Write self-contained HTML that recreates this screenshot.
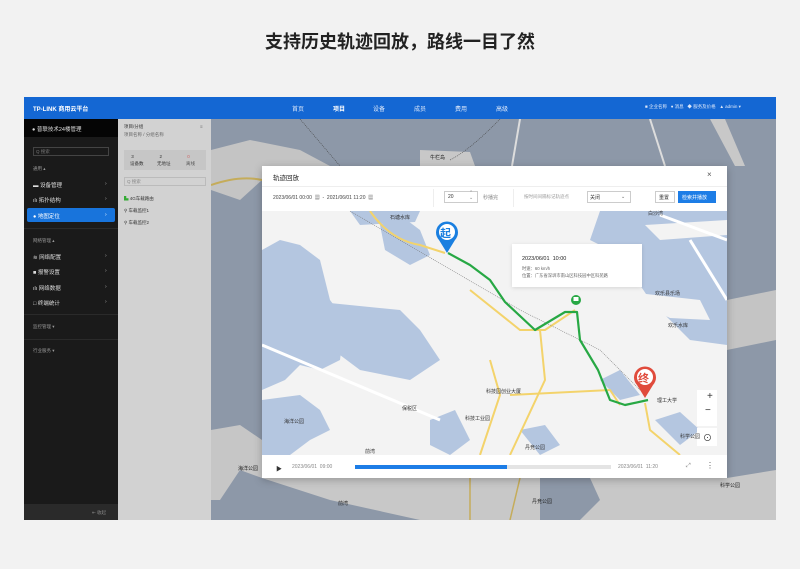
<!DOCTYPE html>
<html><head><meta charset="utf-8"><style>
*{margin:0;padding:0;box-sizing:border-box}
body{width:800px;height:569px;background:#f2f2f2;font-family:"Liberation Sans","Noto Sans CJK SC",sans-serif;position:relative;overflow:hidden;color:#333}
.a{position:absolute}
.t{font-size:5px;white-space:nowrap}
</style></head><body>
<div class="a" style="left:0;top:28px;width:800px;text-align:center;font-size:18px;font-weight:bold;color:#222">支持历史轨迹回放，路线一目了然</div>

<!-- top bar -->
<div class="a" style="left:24px;top:97px;width:752px;height:22px;background:#1467d3"></div>
<div class="a t" style="left:33px;top:104px;color:#fff;font-size:6px;font-weight:bold">TP-LINK 商用云平台</div>
<div class="a t" style="left:292px;top:104px;color:#dde8fa;font-size:6px">首页</div>
<div class="a t" style="left:333px;top:104px;color:#fff;font-size:6px;font-weight:bold">项目</div>
<div class="a t" style="left:373px;top:104px;color:#dde8fa;font-size:6px">设备</div>
<div class="a t" style="left:414px;top:104px;color:#dde8fa;font-size:6px">成员</div>
<div class="a t" style="left:455px;top:104px;color:#dde8fa;font-size:6px">费用</div>
<div class="a t" style="left:496px;top:104px;color:#dde8fa;font-size:6px">高级</div>
<div class="a t" style="left:645px;top:104px;color:#dde8fa;font-size:4.5px">■ 企业名称 &nbsp; ● 消息 &nbsp; ◆ 服务及价格 &nbsp; ▲ admin ▾</div>

<!-- sidebar -->
<div class="a" style="left:24px;top:119px;width:94px;height:401px;background:#1a1a1a"></div>
<div class="a" style="left:24px;top:119px;width:94px;height:18px;background:#050505"></div>
<div class="a t" style="left:32px;top:125px;color:#ddd;font-size:5.5px">● 普联技术24楼管理</div>
<div class="a" style="left:33px;top:147px;width:76px;height:9px;border:1px solid #444"></div>
<div class="a t" style="left:36px;top:149px;color:#777;font-size:4.5px">Q 搜索</div>
<div class="a t" style="left:33px;top:166px;color:#999;font-size:4.5px">通用 ▴</div>
<div class="a t" style="left:33px;top:181px;color:#ddd;font-size:5.5px">▬ 设备管理</div>
<div class="a t" style="left:33px;top:196px;color:#ddd;font-size:5.5px">ılı 拓扑结构</div>
<div class="a" style="left:27px;top:208px;width:88px;height:14px;background:#1874dc;border-radius:2px"></div>
<div class="a t" style="left:33px;top:212px;color:#fff;font-size:5.5px">● 地图定位</div>
<div class="a t" style="left:105px;top:181px;color:#aaa">›</div>
<div class="a t" style="left:105px;top:196px;color:#aaa">›</div>
<div class="a t" style="left:105px;top:212px;color:#fff">›</div>
<div class="a" style="left:24px;top:228px;width:94px;height:1px;background:#2a2a2a"></div>
<div class="a t" style="left:33px;top:238px;color:#999;font-size:4.5px">网络管理 ▴</div>
<div class="a t" style="left:33px;top:253px;color:#ddd;font-size:5.5px">≋ 网络配置</div>
<div class="a t" style="left:33px;top:268px;color:#ddd;font-size:5.5px">■ 报警设置</div>
<div class="a t" style="left:33px;top:284px;color:#ddd;font-size:5.5px">ılı 网络数据</div>
<div class="a t" style="left:33px;top:299px;color:#ddd;font-size:5.5px">□ 终端统计</div>
<div class="a t" style="left:105px;top:253px;color:#aaa">›</div>
<div class="a t" style="left:105px;top:268px;color:#aaa">›</div>
<div class="a t" style="left:105px;top:284px;color:#aaa">›</div>
<div class="a t" style="left:105px;top:299px;color:#aaa">›</div>
<div class="a" style="left:24px;top:314px;width:94px;height:1px;background:#2a2a2a"></div>
<div class="a t" style="left:33px;top:324px;color:#999;font-size:4.5px">监控管理 ▾</div>
<div class="a" style="left:24px;top:339px;width:94px;height:1px;background:#2a2a2a"></div>
<div class="a t" style="left:33px;top:348px;color:#999;font-size:4.5px">行业服务 ▾</div>
<div class="a" style="left:24px;top:504px;width:94px;height:16px;background:#2a2a2a"></div>
<div class="a t" style="left:92px;top:510px;color:#888;font-size:4.5px">⇤ 收起</div>

<!-- panel -->
<div class="a" style="left:118px;top:119px;width:93px;height:401px;background:#d2d2d2"></div>
<div class="a t" style="left:124px;top:124px;color:#333;font-size:4.5px">项目/分组</div>
<div class="a t" style="left:124px;top:132px;color:#666;font-size:4.5px">项目名称 / 分组名称</div>
<div class="a t" style="left:200px;top:124px;color:#666;font-size:4.5px">≡</div>
<div class="a" style="left:124px;top:150px;width:82px;height:20px;background:#c6c6c6"></div>
<div class="a t" style="left:130px;top:153px;color:#333;font-size:4.5px;line-height:7px">&nbsp;3<br>设备数</div>
<div class="a t" style="left:157px;top:153px;color:#333;font-size:4.5px;line-height:7px">&nbsp;&nbsp;2<br>无地址</div>
<div class="a t" style="left:186px;top:153px;color:#c66;font-size:4.5px;line-height:7px">&nbsp;0<br><span style="color:#555">离线</span></div>
<div class="a" style="left:124px;top:177px;width:82px;height:9px;border:1px solid #bbb"></div>
<div class="a t" style="left:127px;top:179px;color:#888;font-size:4.5px">Q 搜索</div>
<div class="a t" style="left:124px;top:196px;color:#333;font-size:4.5px"><span style="color:#3a3">▙</span> 4G车载路由</div>
<div class="a t" style="left:124px;top:208px;color:#333;font-size:4.5px">⚲ 车载监控1</div>
<div class="a t" style="left:124px;top:220px;color:#333;font-size:4.5px">⚲ 车载监控2</div>

<!-- outer dimmed map -->
<svg class="a" style="left:211px;top:119px" width="565" height="401" viewBox="211 119 565 401">
<rect x="211" y="119" width="565" height="401" fill="#8d98a8"/>
<polygon points="211,150 250,140 300,150 330,166 262,166 262,180 240,200 211,190" fill="#c4c4c4"/>
<polygon points="211,430 240,425 262,440 262,478 240,470 220,500 211,500" fill="#c6c6c6"/>
<polygon points="262,478 727,478 776,470 776,520 420,520 330,500" fill="#c8c8c8"/>
<polygon points="540,478 590,478 600,500 580,520 540,520" fill="#8d98a8"/>
<polygon points="420,150 470,152 475,166 420,166" fill="#c8c8c8"/>
<polygon points="710,119 725,119 745,166 735,166" fill="#c8c8c8"/>
<polygon points="727,300 776,290 776,340 727,350" fill="#c4c4c4"/>
<g fill="none">
<path d="M211,185 Q240,175 262,180" stroke="#c5ac5a" stroke-width="2"/>
<path d="M520,119 L512,166" stroke="#ddd" stroke-width="2"/>
<path d="M650,119 L665,166" stroke="#ddd" stroke-width="2"/>
<path d="M300,119 L340,166" stroke="#444" stroke-width="0.6" stroke-dasharray="1,1"/>
<path d="M450,160 Q470,150 500,119" stroke="#444" stroke-width="0.6" stroke-dasharray="1,1"/>
<path d="M470,478 L470,520 M520,478 L510,520" stroke="#c5ac5a" stroke-width="1.5"/>
</g>
</svg>
<div class="a t" style="left:430px;top:154px;color:#222">牛栏岛</div>
<div class="a t" style="left:238px;top:465px;color:#222">海洋公园</div>
<div class="a t" style="left:338px;top:500px;color:#222">前湾</div>
<div class="a t" style="left:532px;top:498px;color:#222">丹竞公园</div>
<div class="a t" style="left:720px;top:482px;color:#222">科学公园</div>

<!-- dialog -->
<div class="a" style="left:262px;top:166px;width:465px;height:312px;background:#fff;box-shadow:0 2px 8px rgba(0,0,0,.25)"></div>
<div class="a t" style="left:273px;top:172px;color:#222;font-size:6.5px">轨迹回放</div>
<div class="a t" style="left:707px;top:170px;color:#555;font-size:8px">×</div>
<div class="a" style="left:262px;top:186px;width:465px;height:1px;background:#eee"></div>
<div class="a t" style="left:273px;top:194px;color:#444;font-size:5px">2023/06/01 00:00 &nbsp;▦ &nbsp;- &nbsp;2021/06/01 11:20 &nbsp;▦</div>
<div class="a" style="left:433px;top:189px;width:1px;height:18px;background:#eee"></div>
<div class="a" style="left:444px;top:191px;width:34px;height:12px;border:1px solid #ccc"></div>
<div class="a t" style="left:448px;top:194px;color:#333;font-size:5px">20</div>
<div class="a t" style="left:469px;top:191px;color:#888;font-size:5px;line-height:5px">⌃<br>⌄</div>
<div class="a t" style="left:483px;top:194px;color:#888;font-size:5px">秒播完</div>
<div class="a" style="left:513px;top:189px;width:1px;height:18px;background:#eee"></div>
<div class="a t" style="left:524px;top:194px;color:#999;font-size:4.5px">按时间间隔标记轨迹点</div>
<div class="a" style="left:587px;top:191px;width:44px;height:12px;border:1px solid #ccc"></div>
<div class="a t" style="left:590px;top:194px;color:#333;font-size:5px">关闭</div>
<div class="a t" style="left:621px;top:194px;color:#666;font-size:5px">⌄</div>
<div class="a" style="left:655px;top:191px;width:20px;height:12px;border:1px solid #ccc"></div>
<div class="a t" style="left:659px;top:194px;color:#333;font-size:5px">重置</div>
<div class="a" style="left:678px;top:191px;width:38px;height:12px;background:#1d7de6"></div>
<div class="a t" style="left:682px;top:194px;color:#fff;font-size:5px">检索并播放</div>

<!-- dialog map -->
<svg class="a" style="left:262px;top:211px" width="465" height="244" viewBox="262 211 465 244">
<rect x="262" y="211" width="465" height="244" fill="#f3f3f3"/>
<g fill="#b4c6e0">
<polygon points="262,250 280,240 300,245 320,260 330,300 345,320 340,360 320,370 300,365 285,380 262,390"/>
<polygon points="300,300 400,310 420,330 440,360 410,380 360,370 320,340"/>
<polygon points="262,400 300,395 320,410 330,430 310,440 290,455 262,455"/>
<polygon points="380,225 400,215 420,230 430,255 410,265 385,250"/>
<polygon points="600,211 727,211 727,345 690,340 670,320 650,300 630,270 610,250 590,240"/>
<polygon points="430,420 455,410 470,440 450,455 430,445"/>
<polygon points="520,430 545,425 560,445 540,455"/>
<polygon points="655,420 680,412 700,430 680,445"/>
<polygon points="600,380 620,370 640,395 620,400"/>
<polygon points="350,211 420,211 415,222 360,225"/>
</g>
<g fill="#f3f3f3">
<polygon points="610,290 700,300 710,320 670,318"/>
<polygon points="645,225 727,220 727,235 660,240"/>
</g>
<g stroke="#fff" stroke-width="3" fill="none">
<path d="M262,345 L440,420"/><path d="M660,215 L727,240"/><path d="M690,240 L727,300"/>
</g>
<g stroke="#f3d36b" stroke-width="2" fill="none">
<path d="M370,211 Q390,240 420,245 L445,253"/>
<path d="M470,290 L520,330 L545,330 L575,310"/>
<path d="M540,330 L545,380 L510,455"/>
<path d="M510,395 L610,390 L620,405"/>
<path d="M490,360 L500,395 L480,455"/>
<path d="M645,403 L650,430 L680,455"/>
</g>
<path d="M350,211 L520,310 L600,350 L640,390" stroke="#777" stroke-width="0.6" stroke-dasharray="1,1" fill="none"/>
<path d="M448,253 L470,265 L490,280 L505,302 L535,330 L565,312 L577,312 L580,340 L598,370 L610,400 L625,405 L648,400" stroke="#27a844" stroke-width="2.2" fill="none" stroke-linejoin="round"/>
<circle cx="576" cy="300" r="5" fill="#27a844"/>
<rect x="573.5" y="297" width="5" height="4" fill="#fff"/>
<path d="M447,253 L439,240 A11,11 0 1 1 455,240 Z" fill="#1a7fe0"/>
<circle cx="447" cy="232" r="8" fill="#fff"/>
<path d="M645,398 L637,385 A11,11 0 1 1 653,385 Z" fill="#e04b3c"/>
<circle cx="645" cy="377" r="8" fill="#fff"/>
<rect x="697" y="390" width="20" height="36" fill="#fff"/>
<rect x="697" y="428" width="20" height="18" fill="#fff"/>
</svg>
<div class="a t" style="left:440px;top:225px;color:#1a7fe0;font-size:11px;font-weight:bold">起</div>
<div class="a t" style="left:638px;top:370px;color:#e04b3c;font-size:11px;font-weight:bold">终</div>
<div class="a t" style="left:707px;top:391px;color:#333;font-size:10px">+</div>
<div class="a t" style="left:705px;top:405px;color:#333;font-size:10px">−</div>
<div class="a t" style="left:703px;top:431px;color:#333;font-size:9px">⊙</div>
<div class="a t" style="left:390px;top:214px;color:#333">石塘水库</div>
<div class="a t" style="left:648px;top:210px;color:#333">白沙湾</div>
<div class="a t" style="left:655px;top:290px;color:#333">欢乐县乐场</div>
<div class="a t" style="left:668px;top:322px;color:#333">欢乐水库</div>
<div class="a t" style="left:486px;top:388px;color:#333">科技园创业大厦</div>
<div class="a t" style="left:402px;top:405px;color:#333">保税区</div>
<div class="a t" style="left:465px;top:415px;color:#333">科技工业园</div>
<div class="a t" style="left:284px;top:418px;color:#333">海洋公园</div>
<div class="a t" style="left:525px;top:444px;color:#333">丹竞公园</div>
<div class="a t" style="left:365px;top:448px;color:#333">前湾</div>
<div class="a t" style="left:657px;top:397px;color:#333">理工大学</div>
<div class="a t" style="left:680px;top:433px;color:#333">科学公园</div>
<div class="a" style="left:512px;top:244px;width:130px;height:43px;background:#fff;box-shadow:0 1px 4px rgba(0,0,0,.12)"></div>
<div class="a t" style="left:522px;top:256px;color:#222;font-size:5.5px">2023/06/01 &nbsp;10:00</div>
<div class="a t" style="left:522px;top:266px;color:#666;font-size:4.3px">时速：60 km/h</div>
<div class="a t" style="left:522px;top:273px;color:#666;font-size:4.3px">位置：广东省深圳市南山区科技园中区科苑路</div>

<!-- footer -->
<div class="a" style="left:262px;top:458px;width:465px;height:20px;background:#fff"></div>
<div class="a t" style="left:276px;top:464px;color:#333;font-size:6px">▶</div>
<div class="a t" style="left:292px;top:464px;color:#888;font-size:5px">2023/06/01 &nbsp;09:00</div>
<div class="a" style="left:355px;top:465px;width:256px;height:4px;background:#e4e4e4"></div>
<div class="a" style="left:355px;top:465px;width:152px;height:4px;background:#1d7de6"></div>
<div class="a t" style="left:618px;top:464px;color:#888;font-size:5px">2023/06/01 &nbsp;11:20</div>
<div class="a t" style="left:686px;top:463px;color:#888;font-size:6px">⤢</div>
<div class="a t" style="left:706px;top:461px;color:#555;font-size:8px">⋮</div>
</body></html>
